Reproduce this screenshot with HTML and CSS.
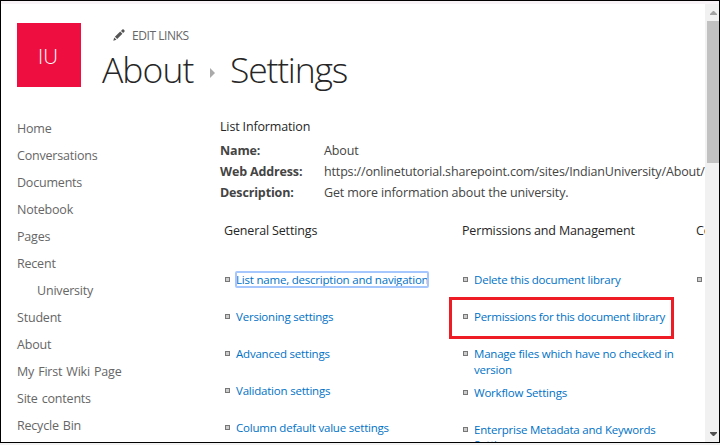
FILE: index.html
```html
<!DOCTYPE html>
<html lang="en">
<head>
<meta charset="utf-8">
<title>About - Settings</title>
<link rel="stylesheet" href="styles.css">
</head>
<body>
<div class="window">
  <div class="top-strip"></div>
  <div class="viewport">
    <div class="page">
      <header class="header">
        <div class="logo">IU</div>
        <div class="heading">
          <a class="edit-links">
            <svg class="pencil" viewBox="0 0 12 12" width="12" height="12"><path d="M0.3 11.7 1.2 8.5 3.5 10.8ZM1.9 7.7 7.2 2.6 9.4 4.8 4.2 10.1ZM8 1.9 9.3 0.6Q10 0 10.7 0.6L11.4 1.3Q12 2 11.4 2.7L10.1 4Z"/></svg>
            <span>EDIT LINKS</span>
          </a>
          <h1 class="title"><span class="t-about">About</span><svg class="crumb" viewBox="0 0 5 10" width="5" height="10"><path d="M0 0 5 5 0 10Z"/></svg><span class="t-settings">Settings</span></h1>
        </div>
      </header>
      <div class="body">
        <nav class="nav">
          <a>Home</a><a>Conversations</a><a>Documents</a><a>Notebook</a><a>Pages</a><a>Recent</a><a class="sub">University</a><a>Student</a><a>About</a><a>My First Wiki Page</a><a>Site contents</a><a>Recycle Bin</a>
        </nav>
        <main class="main">
          <h2 class="section">List Information</h2>
          <dl class="info">
            <dt>Name:</dt><dd>About</dd>
            <dt>Web Address:</dt><dd class="url">https://onlinetutorial.sharepoint.com/sites/IndianUniversity/About/</dd>
            <dt>Description:</dt><dd>Get more information about the university.</dd>
          </dl>
          <div class="columns">
            <section class="col">
              <h3>General Settings</h3>
              <ul>
                <li><a class="focused">List name, description and navigation</a></li>
                <li><a>Versioning settings</a></li>
                <li><a>Advanced settings</a></li>
                <li><a>Validation settings</a></li>
                <li><a>Column default value settings</a></li>
              </ul>
            </section>
            <section class="col second">
              <h3>Permissions and Management</h3>
              <ul>
                <li><a>Delete this document library</a></li>
                <li class="marked"><a>Permissions for this document library</a></li>
                <li class="tall"><a>Manage files which have no checked in<br>version</a></li>
                <li><a>Workflow Settings</a></li>
                <li class="tight"><a>Enterprise Metadata and Keywords<br>Settings</a></li>
              </ul>
            </section>
            <section class="col">
              <h3>Communications</h3>
              <ul><li></li></ul>
            </section>
          </div>
        </main>
      </div>
    </div>
    <div class="scrollbar">
      <svg class="up" viewBox="0 0 7 4" width="7" height="4"><path d="M0 4V3L3 0H4L7 3V4Z"/></svg>
      <div class="thumb"></div>
      <svg class="down" viewBox="0 0 7 4" width="7" height="4"><path d="M0 0H7V1L4 4H3L0 1Z"/></svg>
    </div>
  </div>
</div>
</body>
</html>
```
FILE: styles.css
```css
*, *::before, *::after { box-sizing: border-box; }
body { margin: 0; height: 445px; overflow: hidden; background: #f1f1f1; font-family: "Open Sans", "Noto Sans", sans-serif; }
.window { width: 720px; height: 443px; border: 1px solid #000; background: #fff; overflow: hidden; }
.top-strip { height: 3px; background: #f8f3f7; }
.viewport { display: flex; height: 438px; }
.page { width: 704px; flex: none; overflow: hidden; padding: 19px 0 0 16px; }
.header { display: flex; height: 92px; }
.logo { width: 64px; height: 64px; flex: none; background: #ee0f40; color: #fff; font-size: 20.5px; font-weight: 300; line-height: 66px; text-align: center; padding-right: 2px; }
.heading { padding-left: 21px; }
.edit-links { display: flex; align-items: center; gap: 7px; height: 24px; padding-left: 11px; color: #666; font-size: 12px; letter-spacing: -0.45px; }
.pencil { fill: #555; margin-top: -1px; }
.title { display: flex; align-items: center; height: 46px; margin: -1px 0 0; font-size: 35.5px; font-weight: 300; line-height: 46px; letter-spacing: -0.95px; color: #262626; white-space: nowrap; }
.t-about { width: 108px; }
.t-settings { letter-spacing: -1.2px; }
.crumb { fill: #aaa; margin: 8px 15px 0 0; }
.body { display: flex; }
.nav { width: 203px; flex: none; display: flex; flex-direction: column; color: #666; font-size: 12.5px; letter-spacing: -0.2px; word-spacing: 1px; }
.nav a { height: 27px; line-height: 27px; }
.nav .sub { padding-left: 20px; }
.main { flex: none; width: 720px; color: #444; font-size: 12.5px; }
.section { margin: 0; height: 25px; font-size: 12.5px; line-height: 23px; font-weight: 400; color: #262626; letter-spacing: -0.15px; }
.info { display: grid; grid-template-columns: 104px auto; grid-auto-rows: 21px; margin: 0; line-height: 21px; white-space: nowrap; }
.info dt { font-weight: 700; letter-spacing: -0.15px; }
.info dd { margin: 0; letter-spacing: -0.14px; }
.info .url { letter-spacing: -0.15px; }
.columns { display: flex; padding: 17px 0 0 4px; }
.col { width: 238px; flex: none; }
.col.second { width: 234px; }
.col h3 { margin: 0; height: 34px; font-size: 12.5px; line-height: 21px; font-weight: 400; color: #262626; letter-spacing: -0.15px; }
.col ul { list-style: none; margin: 0; padding: 15px 0 0; }
.col li { position: relative; height: 37px; padding: 3px 0 0 12px; font-size: 11.5px; line-height: 16px; letter-spacing: -0.21px; color: #0072c6; white-space: nowrap; }
.col li.tall { height: 39px; }
.col li.marked { letter-spacing: -0.27px; }
.col li.tight { line-height: 15px; }
.col li::before { content: ""; position: absolute; left: 1px; top: 8px; width: 5px; height: 5px; border: 1px solid #777; background: #ccc; }
.focused { outline: 2px solid #a5c7fe; outline-offset: -1px; border-radius: 1px; }
.marked::after { content: ""; position: absolute; left: -13px; top: -9px; width: 225px; height: 42px; border: 3px solid #ee1c25; }
.scrollbar { width: 14px; flex: none; display: flex; flex-direction: column; background: #f1f1f1; padding: 7px 0 6px 2px; }
.scrollbar svg { margin-left: 3px; flex: none; }
.up { fill: #a3a3a3; }
.thumb { height: 142px; margin: 6px 0 auto; background: #c1c1c1; }
.down { fill: #505050; }
```
